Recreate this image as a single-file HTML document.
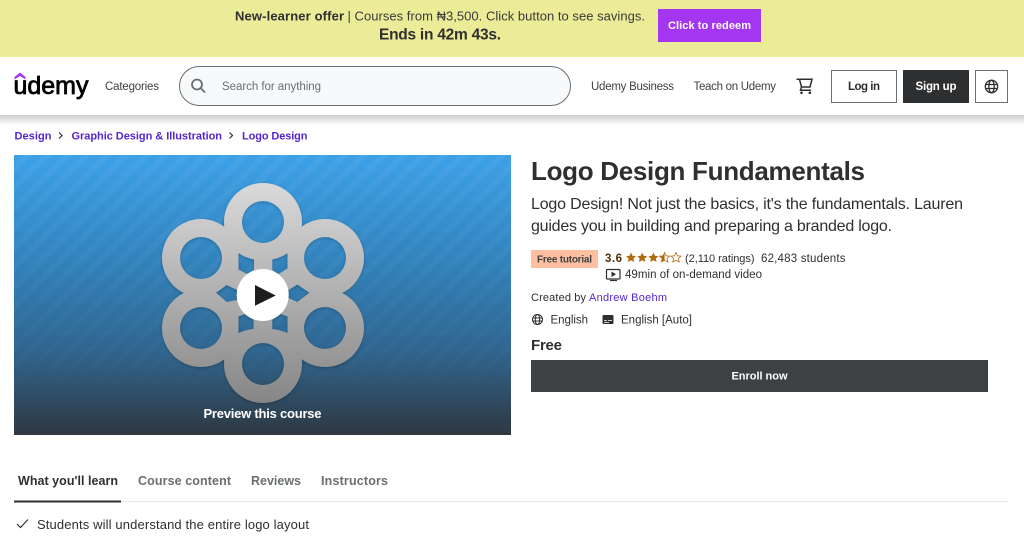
<!DOCTYPE html>
<html lang="en"><head><meta charset="utf-8"><title>Logo Design Fundamentals</title>
<style>
html,body{margin:0;padding:0;width:1024px;height:541px;overflow:hidden;background:#fff}
svg{display:block;position:absolute;left:0;top:0}
text{font-family:"Liberation Sans",sans-serif;fill:#2d2f31}
.b{font-weight:700}
</style></head><body>
<svg width="1024" height="541" viewBox="0 0 1024 541" xmlns="http://www.w3.org/2000/svg">
<defs>
<linearGradient id="sh" x1="0" y1="0" x2="0" y2="1"><stop offset="0" stop-color="#000" stop-opacity=".2"/><stop offset="1" stop-color="#000" stop-opacity="0"/></linearGradient>
<linearGradient id="vid" x1="0" y1="0" x2="0" y2="1"><stop offset="0" stop-color="#3da1e8"/><stop offset=".35" stop-color="#3285c0"/><stop offset=".7" stop-color="#2f658f"/><stop offset="1" stop-color="#2f3841"/></linearGradient>
<linearGradient id="ring" gradientUnits="userSpaceOnUse" x1="0" y1="183" x2="0" y2="403"><stop offset="0" stop-color="#dadada"/><stop offset="1" stop-color="#868686"/></linearGradient>
<linearGradient id="fade" x1="0" y1="0" x2="0" y2="1"><stop offset="0" stop-color="#fff"/><stop offset=".6" stop-color="#777"/><stop offset="1" stop-color="#000"/></linearGradient>
<pattern id="st" width="14" height="14" patternUnits="userSpaceOnUse" patternTransform="rotate(-45)"><rect width="14" height="6" fill="#fff" opacity=".05"/></pattern>
<mask id="sm" maskUnits="userSpaceOnUse" x="14" y="155" width="497" height="280"><rect x="14" y="155" width="497" height="280" fill="url(#fade)"/></mask>
<mask id="m" maskUnits="userSpaceOnUse" x="14" y="155" width="497" height="280">
<g fill="#fff">
<circle cx="263" cy="222" r="39"/><circle cx="201" cy="258" r="39"/><circle cx="325" cy="258" r="39"/><circle cx="201" cy="328" r="39"/><circle cx="325" cy="328" r="39"/><circle cx="263" cy="364" r="39"/>
<polygon points="263,240 310,268 310,322 263,350 216,322 216,268"/>
</g>
<g fill="#000">
<circle cx="263" cy="222" r="21"/><circle cx="201" cy="258" r="21"/><circle cx="325" cy="258" r="21"/><circle cx="201" cy="328" r="21"/><circle cx="325" cy="328" r="21"/><circle cx="263" cy="364" r="21"/>
<path d="M238.500 253.300Q246 258 254 259.500V270L247 274L238.500 269.500Z"/>
<path d="M287.500 253.300Q280 258 272.300 259.500V270L278.500 274L287.500 268.500Z"/>
<path d="M238.500 316.500L246.500 313.500L253.500 320V329Q245 330 238.500 333Z"/>
<path d="M287.500 316.500L279.500 313.500L272.300 320V329Q281 330 287.500 333Z"/>
<path d="M216 292.700L226.700 285L237 290V300L226.700 302Z"/>
<path d="M309.500 292.700L297.300 284.500L288.500 290V298L297.300 302Z"/>
</g>
</mask>
<filter id="ds" x="-10%" y="-10%" width="120%" height="120%"><feDropShadow dx="0" dy="1" stdDeviation="1.5" flood-color="#000" flood-opacity=".25"/></filter>
</defs>

<!-- Offer banner -->
<rect width="1024" height="57" fill="#eceb98"/>
<text x="235" y="20.500" font-size="13" class="b" textLength="109">New-learner offer</text>
<text x="347.500" y="20.500" font-size="13" textLength="297.500" style="fill:#3a3b3a">| Courses from ₦3,500. Click button to see savings.</text>
<text x="379" y="39.500" font-size="15.500" class="b" textLength="122">Ends in 42m 43s.</text>
<rect x="658" y="9" width="103" height="33" fill="#a435f0"/>
<text x="668" y="29" font-size="11" class="b" textLength="83" style="fill:#fff">Click to redeem</text>

<!-- Header -->
<rect y="115" width="1024" height="10" fill="url(#sh)"/>
<rect y="57" width="1024" height="58" fill="#fff"/>
<path d="M14.500 77L20 72.500L25.500 77V79.500L20 76L14.500 79.500Z" fill="#a435f0"/>
<text x="13.500" y="94" font-size="25" textLength="75" style="fill:#000;stroke:#000;stroke-width:.8">udemy</text>
<text x="105" y="90" font-size="11.500" textLength="54" style="fill:#3e4143">Categories</text>
<rect x="179.500" y="66.500" width="391" height="39" rx="19.500" fill="#f7f9fa" stroke="#6a6f73"/>
<g fill="none" stroke="#6a6f73" stroke-width="1.800"><circle cx="197" cy="84.500" r="5"/><path d="M200.500 88L205 92.500"/></g>
<text x="222" y="90" font-size="11.500" textLength="99" style="fill:#6a6f73">Search for anything</text>
<text x="591" y="90" font-size="11.500" textLength="83" style="fill:#3e4143">Udemy Business</text>
<text x="693.500" y="90" font-size="11.500" textLength="82.500" style="fill:#3e4143">Teach on Udemy</text>
<g fill="none" stroke="#2d2f31" stroke-width="1.500"><path d="M796.500 79.300H812L810 87H801.500L799.500 79.300"/><path d="M801.500 87L800.500 90.300H811"/></g>
<circle cx="801.500" cy="92.800" r="1.300" fill="#2d2f31"/><circle cx="809.800" cy="92.800" r="1.300" fill="#2d2f31"/>
<rect x="831.500" y="70.500" width="65" height="32" fill="#fff" stroke="#6a6f73"/>
<text x="848" y="90" font-size="11.500" class="b" textLength="32">Log in</text>
<rect x="903" y="70" width="66" height="33" fill="#2d2f31"/>
<text x="915.500" y="90" font-size="11.500" class="b" textLength="41" style="fill:#fff">Sign up</text>
<rect x="975.500" y="70.500" width="32" height="32" fill="#fff" stroke="#6a6f73"/>
<g fill="none" stroke="#2d2f31" stroke-width="1.300"><circle cx="991.500" cy="86.500" r="6.200"/><ellipse cx="991.500" cy="86.500" rx="2.700" ry="6.200"/><path d="M985.500 84.500H997.500M985.500 88.500H997.500"/></g>

<!-- Breadcrumb -->
<g style="font-weight:700" font-size="11">
<text x="14.500" y="139.500" textLength="37" style="fill:#5624d0">Design</text>
<text x="71.500" y="139.500" textLength="150.500" style="fill:#5624d0">Graphic Design &amp; Illustration</text>
<text x="242" y="139.500" textLength="65.500" style="fill:#5624d0">Logo Design</text>
</g>
<path d="M59 132.500L62 135.500L59 138.500M229.500 132.500L232.500 135.500L229.500 138.500" fill="none" stroke="#2d2f31" stroke-width="1.200"/>

<!-- Video -->
<rect x="14" y="155" width="497" height="280" fill="url(#vid)"/>
<rect x="14" y="155" width="497" height="280" fill="url(#st)" mask="url(#sm)"/>
<g filter="url(#ds)"><rect x="14" y="155" width="497" height="280" fill="url(#ring)" mask="url(#m)"/></g>
<circle cx="262.700" cy="295" r="26" fill="#fff"/>
<path d="M255 285L275.700 295.500L255 305.700Z" fill="#1c1d1f"/>
<text x="203.500" y="418" font-size="13" class="b" textLength="118" style="fill:#fff">Preview this course</text>

<!-- Course info -->
<text x="531" y="180" font-size="26" class="b" textLength="334">Logo Design Fundamentals</text>
<text x="531" y="209" font-size="16" textLength="432">Logo Design! Not just the basics, it's the fundamentals. Lauren</text>
<text x="531" y="231" font-size="16" textLength="361">guides you in building and preparing a branded logo.</text>
<rect x="531" y="250" width="67" height="18" fill="#fdbf9f"/>
<text x="537" y="262.500" font-size="10" class="b" textLength="55" style="fill:#3e4143">Free tutorial</text>
<text x="605" y="262" font-size="11.500" class="b" textLength="17" style="fill:#4d3105">3.6</text>
<g fill="#b4690e">
<path d="M631 252.500L632.500 255.800L636 256.200L633.400 258.500L634.200 262L631 260.200L627.800 262L628.600 258.500L626 256.200L629.500 255.800Z"/>
<path d="M642.200 252.500L643.700 255.800L647.200 256.200L644.600 258.500L645.400 262L642.200 260.200L639 262L639.800 258.500L637.200 256.200L640.700 255.800Z"/>
<path d="M653.400 252.500L654.900 255.800L658.400 256.200L655.800 258.500L656.600 262L653.400 260.200L650.200 262L651 258.500L648.400 256.200L651.900 255.800Z"/>
<path d="M664.600 252.500V260.200L661.400 262L662.200 258.500L659.600 256.200L663.100 255.800Z"/>
<path d="M664.600 252.500L666.100 255.800L669.600 256.200L667 258.500L667.800 262L664.600 260.200L661.400 262L662.200 258.500L659.600 256.200L663.100 255.800Z" fill="none" stroke="#b4690e" stroke-width=".8"/>
<path d="M676 252.500L677.500 255.800L681 256.200L678.400 258.500L679.200 262L676 260.200L672.800 262L673.600 258.500L671 256.200L674.500 255.800Z" fill="none" stroke="#b4690e" stroke-width=".8"/>
</g>
<text x="685" y="262" font-size="11" textLength="69.500">(2,110 ratings)</text>
<text x="761" y="262" font-size="11.500" textLength="84.500">62,483 students</text>
<rect x="606.500" y="269.500" width="13.500" height="9.500" rx="1" fill="none" stroke="#2d2f31" stroke-width="1.200"/>
<path d="M611.500 271.500L616 274.200L611.500 277Z" fill="#2d2f31"/><path d="M610 280.500H617" stroke="#2d2f31" stroke-width="1.200"/>
<text x="625" y="278" font-size="11.500" textLength="137">49min of on-demand video</text>
<text x="531" y="301" font-size="11" textLength="55">Created by</text>
<text x="589" y="301" font-size="11" textLength="78" style="fill:#5624d0">Andrew Boehm</text>
<g fill="none" stroke="#2d2f31" stroke-width="1"><circle cx="537.500" cy="319.500" r="5"/><ellipse cx="537.500" cy="319.500" rx="2.200" ry="5"/><path d="M532.500 318H542.500M532.500 321H542.500"/></g>
<text x="550.500" y="323.500" font-size="11.500" textLength="37.500">English</text>
<rect x="602.500" y="315" width="11" height="9" rx="1" fill="#2d2f31"/>
<path d="M604 320.500H607M608 320.500H612M604 322.500H609" stroke="#fff" stroke-width=".8"/>
<text x="621" y="323.500" font-size="11.500" textLength="71">English [Auto]</text>
<text x="531" y="350" font-size="15" class="b" textLength="31">Free</text>
<rect x="531" y="360" width="457" height="32" fill="#3e4143"/>
<text x="731.500" y="379.500" font-size="11" class="b" textLength="56" style="fill:#fff">Enroll now</text>

<!-- Tabs -->
<text x="18" y="485" font-size="12.500" class="b" textLength="100">What you'll learn</text>
<text x="138" y="485" font-size="12.500" class="b" textLength="93" style="fill:#6a6f73">Course content</text>
<text x="251" y="485" font-size="12.500" class="b" textLength="50" style="fill:#6a6f73">Reviews</text>
<text x="321" y="485" font-size="12.500" class="b" textLength="67" style="fill:#6a6f73">Instructors</text>
<rect x="14" y="501" width="994" height="1" fill="#e4e8eb"/>
<rect x="14" y="500.500" width="107" height="2" fill="#2d2f31"/>
<path d="M17 524L20.500 527.500L28 519.500" fill="none" stroke="#2d2f31" stroke-width="1.200"/>
<text x="37" y="529" font-size="13" textLength="272">Students will understand the entire logo layout</text>
</svg>
</body></html>
